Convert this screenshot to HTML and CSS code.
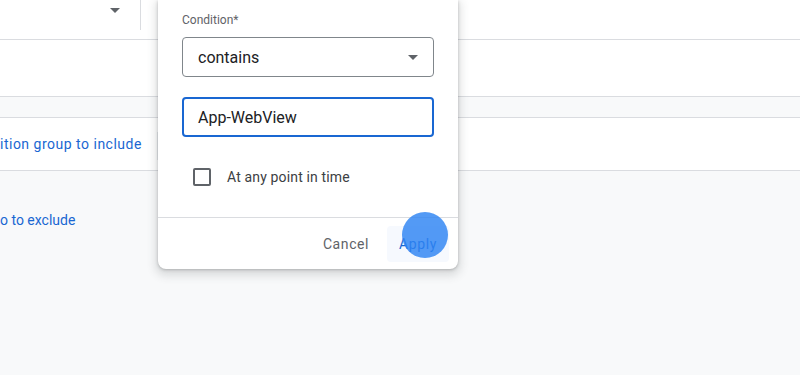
FILE: index.html
```html
<!DOCTYPE html>
<html lang="en">

<head>
    <meta charset="UTF-8">
    <meta name="viewport" content="width=device-width, initial-scale=1.0">
    <title>Condition</title>
    <link rel="stylesheet" href="styles.css">
</head>

<body>
    <div class="page">
        <div class="top-row">
            <div class="top-field">
                <span class="caret"></span>
            </div>
        </div>
        <div class="blank-row"></div>
        <div class="band"></div>
        <div class="include-row">
            <a class="link link-wide">ition group to include</a>
            <span class="stub"></span>
        </div>
        <div class="exclude-area">
            <a class="link">o to exclude</a>
        </div>

        <!-- condition popup -->
        <div class="dialog">
            <div class="dialog-body">
                <label class="field-label" for="condition">Condition*</label>
                <div class="select-box" id="condition">
                    <span>contains</span>
                    <span class="caret"></span>
                </div>
                <div class="text-box">App-WebView</div>
                <div class="check-row">
                    <span class="checkbox"></span>
                    <span>At any point in time</span>
                </div>
            </div>
            <div class="dialog-footer">
                <button type="button" class="btn">Cancel</button>
                <button type="button" class="btn btn-apply">Apply</button>
            </div>
        </div>
        <div class="click-dot"></div>
    </div>
</body>

</html>
```

FILE: styles.css
```css
body {
    font-family: Roboto, "Liberation Sans", Arial, sans-serif;
    margin: 0;
    background-color: #f8f9fa;
    color: #3c4043;
}

.page {
    position: relative;
    width: 800px;
    height: 375px;
    overflow: hidden;
}

.top-row {
    height: 39px;
    background: #fff;
    border-bottom: 1px solid #dadce0;
}

.top-field {
    width: 141px;
    height: 30px;
    border-right: 1px solid #dadce0;
    display: flex;
    align-items: center;
    justify-content: flex-end;
    padding-right: 20px;
    padding-bottom: 9px;
    box-sizing: border-box;
}

.caret {
    width: 0;
    height: 0;
    border-left: 5px solid transparent;
    border-right: 5px solid transparent;
    border-top: 5px solid #5f6368;
}

.blank-row {
    height: 56px;
    background: #fff;
    border-bottom: 1px solid #dadce0;
}

.band {
    height: 20px;
    border-bottom: 1px solid #dadce0;
}

.include-row {
    height: 52px;
    background: #fff;
    border-bottom: 1px solid #dadce0;
    display: flex;
    align-items: center;
}

.link {
    color: #1967d2;
    font-size: 14px;
    line-height: 20px;
}

.link-wide {
    letter-spacing: 0.5px;
}

.stub {
    width: 1px;
    height: 28px;
    background: #e8eaed;
    margin-left: 15px;
    margin-top: 4px;
}

.exclude-area {
    padding-top: 39px;
}

.dialog {
    position: absolute;
    left: 158px;
    top: 0;
    width: 300px;
    height: 269px;
    background: #fff;
    border-radius: 0 0 8px 8px;
    box-shadow: 0 1px 3px rgba(60, 64, 67, 0.3), 0 4px 8px 3px rgba(60, 64, 67, 0.15);
    display: flex;
    flex-direction: column;
}

.dialog-body {
    padding: 12px 24px 0;
    height: 205px;
    border-bottom: 1px solid #dadce0;
}

.field-label {
    display: block;
    font-size: 12px;
    line-height: 16px;
    color: #5f6368;
}

.select-box,
.text-box {
    box-sizing: border-box;
    width: 252px;
    height: 40px;
    border-radius: 4px;
    display: flex;
    align-items: center;
    font-size: 16px;
    color: #202124;
}

.select-box {
    margin-top: 9px;
    border: 1px solid #80868b;
    padding: 0 15px;
    justify-content: space-between;
}

.text-box {
    margin-top: 20px;
    border: 2px solid #1967d2;
    padding: 0 14px;
}

.check-row {
    display: flex;
    align-items: center;
    gap: 16px;
    margin-top: 31px;
    padding-left: 11px;
    font-size: 14px;
    letter-spacing: 0.15px;
    color: #3c4043;
}

.checkbox {
    width: 18px;
    height: 18px;
    box-sizing: border-box;
    border: 2px solid #5f6368;
    border-radius: 2px;
}

.dialog-footer {
    display: flex;
    justify-content: flex-end;
    gap: 6px;
    padding: 8px 9px 0 0;
}

.btn {
    font-family: inherit;
    font-size: 14px;
    font-weight: 400;
    letter-spacing: 0.6px;
    height: 36px;
    padding: 0 12px;
    border: none;
    border-radius: 4px;
    background: transparent;
    color: #5f6368;
}

.btn-apply {
    color: #1967d2;
    background: #f6f9fe;
}

.click-dot {
    position: absolute;
    left: 402px;
    top: 212px;
    width: 46px;
    height: 46px;
    border-radius: 50%;
    background: rgba(45, 132, 243, 0.82);
}
```
